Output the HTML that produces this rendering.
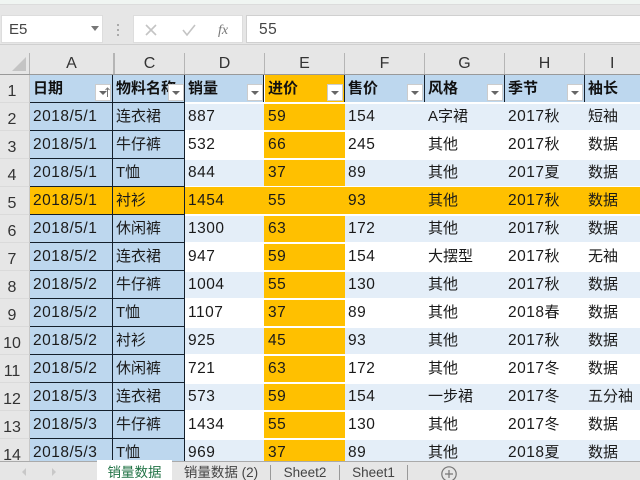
<!DOCTYPE html>
<html><head><meta charset="utf-8"><style>
html,body{margin:0;padding:0;background:#e6e6e6}
#p{position:relative;width:640px;height:480px;overflow:hidden;background:#e6e6e6;font-family:"Liberation Sans","Noto Sans CJK SC",sans-serif;color:#222}
.a{position:absolute}
.w{background:#fff;border:1px solid #d4d4d4;box-sizing:border-box}
.row{position:absolute;left:0;width:670px;height:28px;background:#fff}
.row>span{position:absolute;top:1px;height:26px;line-height:26px;font-size:15px;color:#1a1a1a;white-space:nowrap;overflow:hidden;box-sizing:border-box;padding-left:3px}
.row i{font-style:normal;font-size:15.5px;letter-spacing:.5px}
.row>span:nth-child(1){left:0;top:0;width:30px;height:28px;background:#e6e6e6;padding:4px 5px 0 0;line-height:26px;text-align:center;font-size:16px;color:#333;border-right:1px solid #c8c8c8;border-bottom:1px solid #dadada}
.row>span:nth-child(2){left:30px;width:83px;top:-1px;height:29px;line-height:26px;padding-top:1px;background:#bdd7ee;border-top:1px solid #14202c;border-right:1px solid #14202c}
.row>span:nth-child(3){left:113px;width:72px;top:-1px;height:29px;line-height:26px;padding-top:1px;background:#bdd7ee;border-top:1px solid #14202c;border-right:1px solid #14202c}
.row>span:nth-child(4){left:185px;width:79px}
.row>span:nth-child(5){left:264px;width:81px;padding-left:4px;background:#ffc000}
.row>span:nth-child(6){left:345px;width:80px}
.row>span:nth-child(7){left:425px;width:80px}
.row>span:nth-child(8){left:505px;width:80px}
.row>span:nth-child(9){left:585px;width:85px}
.l>span:nth-child(n+4){background:#e4eef8}
.l>span:nth-child(5){background:#ffc000}
.y>span:nth-child(n+2){background:#ffc000;top:0;height:27px;line-height:28px}
.y>span:nth-child(2),.y>span:nth-child(3){top:-1px;height:29px;line-height:26px}
.h{background:#fff}
.h>span{top:0!important;height:27px!important;background:#bdd7ee;font-weight:bold;line-height:27px!important;padding-top:0!important;border-top:0!important;color:#111!important;border-right:1px solid #14202c}
.h>span:nth-child(1){background:#e6e6e6;font-weight:normal;color:#333!important;height:28px!important;padding-top:4px!important;line-height:26px!important;border-right:1px solid #c8c8c8}
.h>span:nth-child(5){background:#ffc000;left:265px;width:80px;padding-left:3px}
.h>span:nth-child(9){border-right:0}
.f{position:absolute;left:auto;top:84px;width:16px;height:17px;background:#fff;border:1px solid #ccc;box-sizing:border-box}
.f:after{content:"";position:absolute;left:3px;top:6px;border:4px solid transparent;border-top:4px solid #666;border-bottom:0}
.c{position:absolute;top:53px;height:21px;text-align:center;font-size:16px;line-height:22px;color:#333;border-right:1px solid #b5b5b5;box-sizing:border-box}
.t{position:absolute;top:461px;height:19px;line-height:23px;font-size:13.5px;color:#444;text-align:center}
.sp{position:absolute;top:465px;width:1px;height:15px;background:#999}
</style></head><body><div id="p">
<div class="a" style="left:0;top:0;width:640px;height:4px;background:#f0f5f2"></div>
<div class="a" style="left:0;top:4px;width:640px;height:1px;background:#dcdcdc"></div>
<div class="a w" style="left:1px;top:15px;width:102px;height:28px;font-size:15px;line-height:28px;padding-left:7px;color:#444;border-color:#ddd">E5</div>
<div class="a" style="left:91px;top:26px;border:4px solid transparent;border-top:5px solid #777;border-bottom:0"></div>
<div class="a" style="left:117px;top:24px;width:2px;height:2px;background:#aaa;box-shadow:0 5px #aaa,0 10px #aaa"></div>
<div class="a w" style="left:133px;top:15px;width:110px;height:28px;border-color:#ddd"></div>
<svg class="a" style="left:140px;top:20px" width="100" height="20" fill="none" stroke="#c4c4c4" stroke-width="1.6"><path d="M6 5l10 10M16 5L6 15"/><path d="M43 10l4 5 8-10"/><text x="78" y="14" font-family="Liberation Serif" font-style="italic" font-size="14" fill="#777" stroke="none">fx</text></svg>
<div class="a w" style="left:246px;top:15px;width:394px;height:28px;font-size:15.5px;line-height:27px;padding-left:12px;color:#444;border-color:#d0d0d0;border-right:0;letter-spacing:.5px">55</div>
<div class="a" style="left:0;top:44px;width:640px;height:1px;background:#d0d0d0"></div>

<svg class="a" style="left:0;top:53px" width="30" height="21"><path d="M26 4V18H12Z" fill="#c4c4c4"/></svg>
<div class="c" style="left:29px;width:85px;border-left:1px solid #b5b5b5">A</div>
<div class="c" style="left:114px;width:71px;border-left:1px solid #b5b5b5">C</div>
<div class="c" style="left:185px;width:80px">D</div>
<div class="c" style="left:265px;width:80px">E</div>
<div class="c" style="left:345px;width:80px">F</div>
<div class="c" style="left:425px;width:80px">G</div>
<div class="c" style="left:505px;width:80px">H</div>
<div class="c" style="left:585px;width:85px;border:0;text-align:left;padding-left:25px">I</div>
<div class="a" style="left:0;top:74px;width:640px;height:1px;background:#999"></div>

<div class="row h" style="top:75px"><span>1</span><span>日期</span><span>物料名称</span><span>销量</span><span>进价</span><span>售价</span><span>风格</span><span>季节</span><span>袖长</span></div>
<div class="row l" style="top:103px"><span>2</span><span><i>2018/5/1</i></span><span>连衣裙</span><span><i>887</i></span><span><i>59</i></span><span><i>154</i></span><span>A字裙</span><span><i>2017</i>秋</span><span>短袖</span></div>
<div class="row" style="top:131px"><span>3</span><span><i>2018/5/1</i></span><span>牛仔裤</span><span><i>532</i></span><span><i>66</i></span><span><i>245</i></span><span>其他</span><span><i>2017</i>秋</span><span>数据</span></div>
<div class="row l" style="top:159px"><span>4</span><span><i>2018/5/1</i></span><span>T恤</span><span><i>844</i></span><span><i>37</i></span><span><i>89</i></span><span>其他</span><span><i>2017</i>夏</span><span>数据</span></div>
<div class="row y" style="top:187px"><span>5</span><span><i>2018/5/1</i></span><span>衬衫</span><span><i>1454</i></span><span><i>55</i></span><span><i>93</i></span><span>其他</span><span><i>2017</i>秋</span><span>数据</span></div>
<div class="row l" style="top:215px"><span>6</span><span><i>2018/5/1</i></span><span>休闲裤</span><span><i>1300</i></span><span><i>63</i></span><span><i>172</i></span><span>其他</span><span><i>2017</i>秋</span><span>数据</span></div>
<div class="row" style="top:243px"><span>7</span><span><i>2018/5/2</i></span><span>连衣裙</span><span><i>947</i></span><span><i>59</i></span><span><i>154</i></span><span>大摆型</span><span><i>2017</i>秋</span><span>无袖</span></div>
<div class="row l" style="top:271px"><span>8</span><span><i>2018/5/2</i></span><span>牛仔裤</span><span><i>1004</i></span><span><i>55</i></span><span><i>130</i></span><span>其他</span><span><i>2017</i>秋</span><span>数据</span></div>
<div class="row" style="top:299px"><span>9</span><span><i>2018/5/2</i></span><span>T恤</span><span><i>1107</i></span><span><i>37</i></span><span><i>89</i></span><span>其他</span><span><i>2018</i>春</span><span>数据</span></div>
<div class="row l" style="top:327px"><span>10</span><span><i>2018/5/2</i></span><span>衬衫</span><span><i>925</i></span><span><i>45</i></span><span><i>93</i></span><span>其他</span><span><i>2017</i>秋</span><span>数据</span></div>
<div class="row" style="top:355px"><span>11</span><span><i>2018/5/2</i></span><span>休闲裤</span><span><i>721</i></span><span><i>63</i></span><span><i>172</i></span><span>其他</span><span><i>2017</i>冬</span><span>数据</span></div>
<div class="row l" style="top:383px"><span>12</span><span><i>2018/5/3</i></span><span>连衣裙</span><span><i>573</i></span><span><i>59</i></span><span><i>154</i></span><span>一步裙</span><span><i>2017</i>冬</span><span>五分袖</span></div>
<div class="row" style="top:411px"><span>13</span><span><i>2018/5/3</i></span><span>牛仔裤</span><span><i>1434</i></span><span><i>55</i></span><span><i>130</i></span><span>其他</span><span><i>2017</i>冬</span><span>数据</span></div>
<div class="row l" style="top:439px"><span>14</span><span><i>2018/5/3</i></span><span>T恤</span><span><i>969</i></span><span><i>37</i></span><span><i>89</i></span><span>其他</span><span><i>2018</i>夏</span><span>数据</span></div>

<div class="f" style="left:95px"></div>
<svg class="a" style="left:103px;top:86px" width="9" height="12" fill="none" stroke="#777"><path d="M4.5 11V2M2.5 4l2-2 2 2"/></svg>
<div class="f" style="left:168px"></div>
<div class="f" style="left:247px"></div>
<div class="f" style="left:327px"></div>
<div class="f" style="left:407px"></div>
<div class="f" style="left:487px"></div>
<div class="f" style="left:567px"></div>

<div class="a" style="left:0;top:461px;width:640px;height:19px;background:#e6e6e6;border-top:1px solid #aaa;box-sizing:border-box"></div>
<svg class="a" style="left:15px;top:465px" width="50" height="14" fill="#c8c8c8"><path d="M11 3v8L7 7Z"/><path d="M37 3v8l4-4Z"/></svg>
<div class="t" style="left:97px;width:75px;background:#fff;color:#217346;height:20px;top:460px;line-height:25px">销量数据</div>
<div class="t" style="left:172px;width:98px">销量数据 (2)</div>
<div class="sp" style="left:270px"></div>
<div class="t" style="left:271px;width:68px">Sheet2</div>
<div class="sp" style="left:339px"></div>
<div class="t" style="left:340px;width:67px">Sheet1</div>
<div class="sp" style="left:407px"></div>
<svg class="a" style="left:440px;top:465px" width="18" height="15" fill="none" stroke="#777" stroke-width="1.2"><circle cx="9" cy="9" r="7.2"/><path d="M9 5v8M5 9h8"/></svg>
</div></body></html>
